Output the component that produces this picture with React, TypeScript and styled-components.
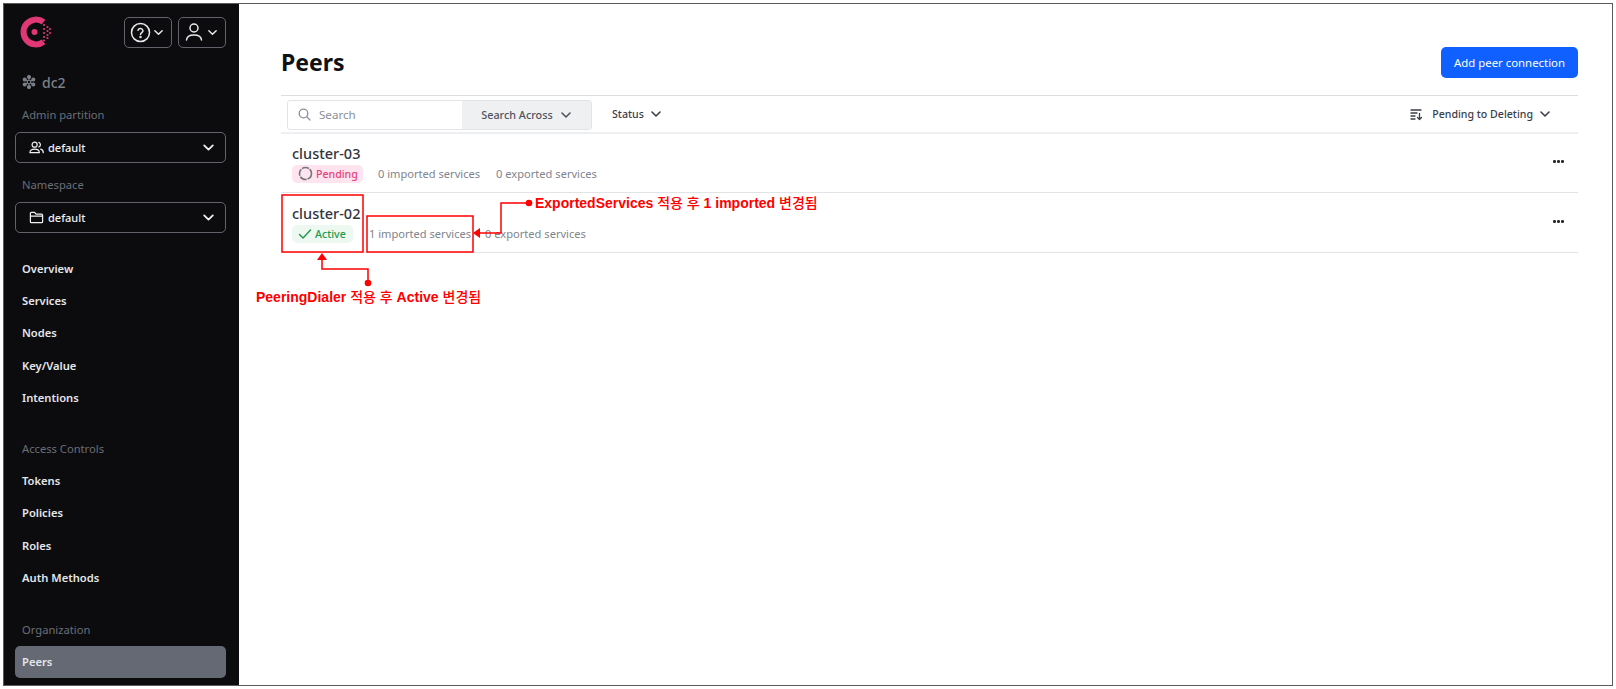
import React from "react";
import styled, { createGlobalStyle } from "styled-components";

const Global = createGlobalStyle`
  html, body { margin: 0; padding: 0; background: #fff; }
  body { font-family: "Noto Sans", "Open Sans", sans-serif; }
  * { box-sizing: border-box; }
`;

const Page = styled.div`
  width: 1616px;
  height: 689px;
  padding: 3px;
  position: relative;
  overflow: hidden;
`;
const Frame = styled.div`
  width: 1610px;
  height: 683px;
  border: 1px solid #5a5a5a;
  display: flex;
`;
const Sidebar = styled.aside`
  width: 235px;
  flex: none;
  background: #0c0c0e;
  padding: 12px 13px 0 11px;
  display: flex;
  flex-direction: column;
`;
const TopBar = styled.div`
  display: flex;
  align-items: center;
  height: 32px;
  gap: 6px;
  margin-bottom: 22px;
`;
const LogoWrap = styled.div`
  flex: 1;
  padding-left: 5px;
  display: flex;
  align-items: center;
`;
const IconButton = styled.div`
  width: 48px;
  height: 31px;
  border: 1px solid #62646c;
  border-radius: 5px;
  display: flex;
  align-items: center;
  justify-content: space-between;
  padding: 0 7px 0 5px;
  color: #e8e9ec;
`;
const Dc = styled.div`
  display: flex;
  align-items: center;
  gap: 6px;
  padding-left: 7px;
  height: 24px;
  color: #7c8088;
  font-size: 14px;
  font-weight: 500;
`;
const GroupLabel = styled.div<{ $top?: number }>`
  padding-left: 7px;
  font-size: 11.2px;
  line-height: 18px;
  color: #6a6e78;
  margin-top: ${(p) => p.$top ?? 0}px;
`;
const Select = styled.div`
  height: 31px;
  margin: 8px 0 0;
  border: 1px solid #62646c;
  border-radius: 5px;
  display: flex;
  align-items: center;
  padding: 0 10px 0 13px;
  gap: 4px;
  color: #f0f1f3;
  font-size: 11px;
  font-weight: 500;
`;
const SelectText = styled.span`
  flex: 1;
`;
const NavList = styled.nav<{ $top: number }>`
  display: flex;
  flex-direction: column;
  margin-top: ${(p) => p.$top}px;
`;
const NavItem = styled.div<{ $active?: boolean }>`
  height: 32.3px;
  display: flex;
  align-items: center;
  padding-left: 7px;
  border-radius: 5px;
  font-size: 11.2px;
  font-weight: 600;
  color: #e4e6ea;
  background: ${(p) => (p.$active ? "#656973" : "transparent")};
`;
const Main = styled.main`
  flex: 1;
  padding: 0 34px 0 42px;
  display: flex;
  flex-direction: column;
  min-width: 0;
`;
const Header = styled.header`
  height: 92px;
  padding-top: 43px;
  display: flex;
  justify-content: space-between;
  align-items: flex-start;
  border-bottom: 1px solid #dcdde0;
`;
const Title = styled.h1`
  margin: -3px 0 0;
  font-size: 23px;
  line-height: 36px;
  font-weight: 700;
  color: #101114;
`;
const PrimaryButton = styled.button`
  width: 137px;
  height: 31px;
  border: 0;
  border-radius: 5px;
  background: #1060ff;
  color: #fff;
  font: 400 11.4px "Noto Sans", sans-serif;
`;
const Toolbar = styled.div`
  height: 38px;
  display: flex;
  align-items: center;
  padding-left: 6px;
  border-bottom: 2px solid #eeeff1;
`;
const SearchBox = styled.div`
  width: 305px;
  height: 30px;
  margin-top: 1px;
  display: flex;
  border: 1px solid #e3e4e8;
  border-radius: 3px;
  overflow: hidden;
`;
const SearchInput = styled.div`
  width: 174px;
  display: flex;
  align-items: center;
  gap: 8px;
  padding-left: 10px;
  color: #8b8f98;
  font-size: 11.6px;
`;
const SearchAcross = styled.div`
  flex: 1;
  background: #eff0f2;
  display: flex;
  align-items: center;
  justify-content: center;
  gap: 7px;
  color: #50545e;
  font-size: 10.8px;
  font-weight: 500;
`;
const FilterButton = styled.div<{ $left?: number; $push?: boolean }>`
  display: flex;
  align-items: center;
  gap: 6px;
  color: #3a3e48;
  font-size: 10.6px;
  font-weight: 500;
  margin-left: ${(p) => (p.$push ? "auto" : `${p.$left ?? 0}px`)};
  margin-right: ${(p) => (p.$push ? "27px" : "0")};
`;
const SortLabel = styled.span`
  margin-left: 3px;
`;
const Row = styled.div<{ $first?: boolean }>`
  height: ${(p) => (p.$first ? 59 : 60)}px;
  padding: ${(p) => (p.$first ? 7 : 8)}px 14px 0 11px;
  border-bottom: 1px solid #e2e3e6;
  display: flex;
  justify-content: space-between;
  align-items: center;
`;
const RowText = styled.div`
  display: flex;
  flex-direction: column;
  margin-top: -8px;
`;
const Name = styled.div`
  font-size: 14.5px;
  line-height: 22px;
  color: #32353c;
  font-weight: 500;
`;
const Meta = styled.div`
  display: flex;
  align-items: center;
  height: 19px;
  font-size: 11.1px;
  color: #80848e;
`;
const Badge = styled.span<{ $tone: "pending" | "active" }>`
  height: 18px;
  border-radius: 5px;
  display: inline-flex;
  align-items: center;
  gap: 3px;
  padding: 0 0 0 6px;
  font-size: 10.6px;
  font-weight: 500;
  width: ${(p) => (p.$tone === "pending" ? "71px" : "61px")};
  margin-right: ${(p) => (p.$tone === "pending" ? 15 : 16)}px;
  background: ${(p) => (p.$tone === "pending" ? "#fde4ee" : "#edf8f1")};
  color: ${(p) => (p.$tone === "pending" ? "#e8417f" : "#1f9a4d")};
`;
const MetaItem = styled.span<{ $gap: number }>`
  margin-right: ${(p) => p.$gap}px;
  white-space: nowrap;
`;
const More = styled.div`
  display: flex;
  gap: 1.6px;
  margin-top: -10px;
`;
const Dot = styled.i`
  width: 2.6px;
  height: 2.6px;
  border-radius: 50%;
  background: #25272d;
  display: block;
`;
const Overlay = styled.svg`
  position: absolute;
  inset: 0;
  pointer-events: none;
`;
const Note = styled.div<{ $x: number; $y: number }>`
  position: absolute;
  left: ${(p) => p.$x}px;
  top: ${(p) => p.$y}px;
  color: #ff0000;
  font: 700 14px/16px "Liberation Sans", "Noto Sans CJK KR", sans-serif;
  white-space: nowrap;
`;
const Hangul = styled.span`
  font-weight: 500;
`;

const Chevron = ({ size = 12, color = "currentColor", w = 1.6 }: { size?: number; color?: string; w?: number }) => (
  <svg width={size} height={size} viewBox="0 0 12 12" fill="none" stroke={color} strokeWidth={w} strokeLinecap="round" strokeLinejoin="round" style={{ flex: "none" }}>
    <path d="M2 4l4 4 4-4" />
  </svg>
);

const Logo = () => (
  <svg width="32" height="32" viewBox="0 0 32 32">
    <path d="M23.5 6.2A12.4 12.4 0 1 0 23.5 25.8" fill="none" stroke="#e03875" strokeWidth="6" />
    <circle cx="14.5" cy="16" r="3" fill="#e03875" />
    {[[24, 9], [27.5, 11], [24, 13], [27.5, 15], [30, 13], [24, 17], [30, 17], [27.5, 19], [24, 21], [27.5, 22], [24, 24.5]].map(([x, y]) => (
      <circle key={`${x}-${y}`} cx={x} cy={y} r="1.05" fill="#e03875" />
    ))}
  </svg>
);

const Snow = () => (
  <svg width="14" height="14" viewBox="0 0 14 14" fill="none" stroke="#7c8088" strokeWidth="1.1">
    <path d="M7 1v12M1.800 4l10.400 6M12.200 4L1.800 10" />
    {[[7, 2], [2.7, 4.500], [11.300, 4.500], [2.7, 9.500], [11.300, 9.500], [7, 12]].map(([x, y]) => (
      <circle key={`${x}-${y}`} cx={x} cy={y} r="1.500" fill="#7c8088" />
    ))}
    <circle cx="7" cy="7" r="1.800" fill="#0c0c0e" />
  </svg>
);

const services = ["Overview", "Services", "Nodes", "Key/Value", "Intentions"];
const access = ["Tokens", "Policies", "Roles", "Auth Methods"];

export default function App() {
  return (
    <Page>
      <Global />
      <Frame>
        <Sidebar>
          <TopBar>
            <LogoWrap><Logo /></LogoWrap>
            <IconButton>
              <svg width="21" height="21" viewBox="0 0 21 21" fill="none" stroke="currentColor" strokeWidth="1.5" strokeLinecap="round">
                <circle cx="10.5" cy="10.5" r="9" />
                <path d="M8 8.2a2.6 2.6 0 0 1 5 .6c0 1.7-2.5 2-2.500 3.600" />
                <circle cx="10.5" cy="15" r=".5" />
              </svg>
              <Chevron size={11} />
            </IconButton>
            <IconButton>
              <svg width="20" height="20" viewBox="0 0 20 20" fill="none" stroke="currentColor" strokeWidth="1.5" strokeLinecap="round">
                <circle cx="10" cy="6" r="4" />
                <path d="M2.500 18c.3-3.600 3-5 7.500-5s7.200 1.400 7.500 5" />
              </svg>
              <Chevron size={11} />
            </IconButton>
          </TopBar>
          <Dc><Snow />dc2</Dc>
          <GroupLabel $top={12}>Admin partition</GroupLabel>
          <Select>
            <svg width="15" height="15" viewBox="0 0 16 16" fill="none" stroke="currentColor" strokeWidth="1.3" strokeLinecap="round">
              <circle cx="6" cy="5" r="2.700" />
              <path d="M1 13.500c0-2.500 2-3.700 5-3.700s5 1.200 5 3.700h-10M10.500 2.500a2.700 2.700 0 0 1 0 5M12.500 9.800c1.500.4 2.700 1.500 2.700 3.700" />
            </svg>
            <SelectText>default</SelectText>
            <Chevron size={13} />
          </Select>
          <GroupLabel $top={13}>Namespace</GroupLabel>
          <Select>
            <svg width="15" height="15" viewBox="0 0 16 16" fill="none" stroke="currentColor" strokeWidth="1.3" strokeLinejoin="round">
              <path d="M1.500 3.500a1 1 0 0 1 1-1h3.500l1.500 2h6a1 1 0 0 1 1 1v7a1 1 0 0 1-1 1h-11a1 1 0 0 1-1-1zM1.500 6.500h13" />
            </svg>
            <SelectText>default</SelectText>
            <Chevron size={13} />
          </Select>
          <NavList $top={19}>
            {services.map((s) => <NavItem key={s}>{s}</NavItem>)}
          </NavList>
          <GroupLabel $top={27}>Access Controls</GroupLabel>
          <NavList $top={6}>
            {access.map((s) => <NavItem key={s}>{s}</NavItem>)}
          </NavList>
          <GroupLabel $top={27}>Organization</GroupLabel>
          <NavList $top={7}>
            <NavItem $active>Peers</NavItem>
          </NavList>
        </Sidebar>
        <Main>
          <Header>
            <Title>Peers</Title>
            <PrimaryButton>Add peer connection</PrimaryButton>
          </Header>
          <Toolbar>
            <SearchBox>
              <SearchInput>
                <svg width="13" height="13" viewBox="0 0 13 13" fill="none" stroke="#8b8f98" strokeWidth="1.300" strokeLinecap="round">
                  <circle cx="5.500" cy="5.500" r="4.300" />
                  <path d="M9 9l3 3" />
                </svg>
                Search
              </SearchInput>
              <SearchAcross>Search Across <Chevron size={12} /></SearchAcross>
            </SearchBox>
            <FilterButton $left={20}>Status <Chevron size={12} /></FilterButton>
            <FilterButton $push>
              <svg width="13" height="13" viewBox="0 0 13 13" fill="none" stroke="#3a3e48" strokeWidth="1.300" strokeLinecap="round" strokeLinejoin="round">
                <path d="M1 2h10M1 5h6M1 8h4M1 11h4M9.500 5.500v6M7.500 9.500l2 2 2-2" />
              </svg>
              <SortLabel>Pending to Deleting</SortLabel> <Chevron size={12} />
            </FilterButton>
          </Toolbar>
          <Row $first>
            <RowText>
              <Name>cluster-03</Name>
              <Meta>
                <Badge $tone="pending">
                  <svg width="15" height="15" viewBox="0 0 15 15" fill="none" stroke="#77767c" strokeWidth="1.600" strokeDasharray="7 1">
                    <circle cx="7.500" cy="7.500" r="6" />
                  </svg>
                  Pending
                </Badge>
                <MetaItem $gap={16}>0 imported services</MetaItem>
                <MetaItem $gap={0}>0 exported services</MetaItem>
              </Meta>
            </RowText>
            <More><Dot /><Dot /><Dot /></More>
          </Row>
          <Row>
            <RowText>
              <Name>cluster-02</Name>
              <Meta>
                <Badge $tone="active">
                  <svg width="14" height="14" viewBox="0 0 14 14" fill="none" stroke="#1f9a4d" strokeWidth="1.400" strokeLinecap="round" strokeLinejoin="round">
                    <path d="M1.500 7.500l3.500 3.500 7.500-8" />
                  </svg>
                  Active
                </Badge>
                <MetaItem $gap={14}>1 imported services</MetaItem>
                <MetaItem $gap={0}>0 exported services</MetaItem>
              </Meta>
            </RowText>
            <More><Dot /><Dot /><Dot /></More>
          </Row>
        </Main>
      </Frame>
      <Overlay width="1616" height="689" viewBox="0 0 1616 689" fill="none">
        <rect x="282" y="195" width="81" height="57" stroke="#ff0000" strokeWidth="1.500" />
        <rect x="367" y="216" width="106" height="36" stroke="#ff0000" strokeWidth="1.500" />
        <path d="M368 283V269H322V258" stroke="#ff0000" strokeWidth="1.500" />
        <path d="M322 253l-5 7h10z" fill="#ff0000" />
        <circle cx="368" cy="283" r="3.300" fill="#ff0000" />
        <path d="M529 203H501V233H478" stroke="#ff0000" strokeWidth="1.500" />
        <path d="M473 233l7-5v10z" fill="#ff0000" />
        <circle cx="529" cy="203" r="3.300" fill="#ff0000" />
      </Overlay>
      <Note $x={256} $y={289}>PeeringDialer <Hangul>적용 후</Hangul> Active <Hangul>변경됨</Hangul></Note>
      <Note $x={535} $y={195}>ExportedServices <Hangul>적용 후</Hangul> 1 imported <Hangul>변경됨</Hangul></Note>
    </Page>
  );
}
